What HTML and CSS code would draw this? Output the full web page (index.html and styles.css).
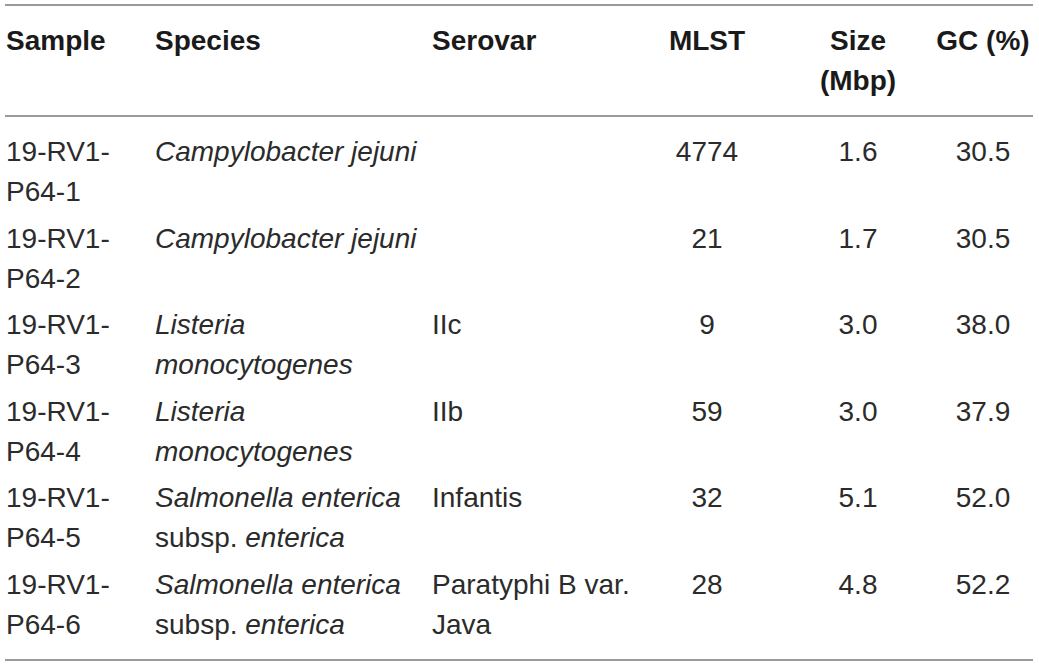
FILE: index.html
```html
<!DOCTYPE html>
<html lang="en">
<head>
  <meta charset="UTF-8" />
  <meta name="viewport" content="width=device-width, initial-scale=1.0" />
  <title>Isolates</title>
  <link rel="stylesheet" href="styles.css">
</head>
<body>
  <table class="isolates">
    <colgroup>
      <col class="c-sample">
      <col class="c-species">
      <col class="c-serovar">
      <col class="c-mlst">
      <col class="c-size">
      <col class="c-gc">
    </colgroup>
    <thead>
      <tr>
        <th>Sample</th>
        <th>Species</th>
        <th>Serovar</th>
        <th class="num">MLST</th>
        <th class="num">Size<br>(Mbp)</th>
        <th class="num">GC (%)</th>
      </tr>
    </thead>
    <tbody>
      <tr>
        <td>19-RV1-<br>P64-1</td>
        <td><i>Campylobacter jejuni</i></td>
        <td></td>
        <td class="num">4774</td>
        <td class="num">1.6</td>
        <td class="num">30.5</td>
      </tr>
      <tr>
        <td>19-RV1-<br>P64-2</td>
        <td><i>Campylobacter jejuni</i></td>
        <td></td>
        <td class="num">21</td>
        <td class="num">1.7</td>
        <td class="num">30.5</td>
      </tr>
      <tr>
        <td>19-RV1-<br>P64-3</td>
        <td><i>Listeria<br>monocytogenes</i></td>
        <td>IIc</td>
        <td class="num">9</td>
        <td class="num">3.0</td>
        <td class="num">38.0</td>
      </tr>
      <tr>
        <td>19-RV1-<br>P64-4</td>
        <td><i>Listeria<br>monocytogenes</i></td>
        <td>IIb</td>
        <td class="num">59</td>
        <td class="num">3.0</td>
        <td class="num">37.9</td>
      </tr>
      <tr>
        <td>19-RV1-<br>P64-5</td>
        <td><i>Salmonella enterica</i><br>subsp. <i>enterica</i></td>
        <td>Infantis</td>
        <td class="num">32</td>
        <td class="num">5.1</td>
        <td class="num">52.0</td>
      </tr>
      <tr>
        <td>19-RV1-<br>P64-6</td>
        <td><i>Salmonella enterica</i><br>subsp. <i>enterica</i></td>
        <td>Paratyphi B var.<br>Java</td>
        <td class="num">28</td>
        <td class="num">4.8</td>
        <td class="num">52.2</td>
      </tr>
    </tbody>
  </table>
</body>
</html>
```

FILE: styles.css
```css
body {
  margin: 0;
  padding: 4px 0 0 5px;
  background: #ffffff;
  font-family: "Liberation Sans", Arial, sans-serif;
  color: #2b2b2b;
}

.isolates {
  width: 1028px;
  border-collapse: collapse;
  table-layout: fixed;
  font-size: 28px;
  line-height: 40px;
  border-top: 2px solid #9a9a9a;
  border-bottom: 2px solid #9a9a9a;
}

.c-sample { width: 149px; }
.c-species { width: 277px; }
.c-serovar { width: 200px; }
.c-mlst { width: 152px; }
.c-size { width: 150px; }
.c-gc { width: 100px; }

th, td {
  text-align: left;
  vertical-align: top;
  padding: 3px 0 3.5px 1px;
}

th {
  font-weight: bold;
  color: #1a1a1a;
  padding-top: 15px;
  padding-bottom: 14px;
  border-bottom: 2px solid #9a9a9a;
  white-space: nowrap;
}

.num {
  text-align: center;
  padding-left: 0;
}

tbody tr:first-child td {
  padding-top: 15px;
}

tbody tr:last-child td {
  padding-bottom: 14px;
}
```
